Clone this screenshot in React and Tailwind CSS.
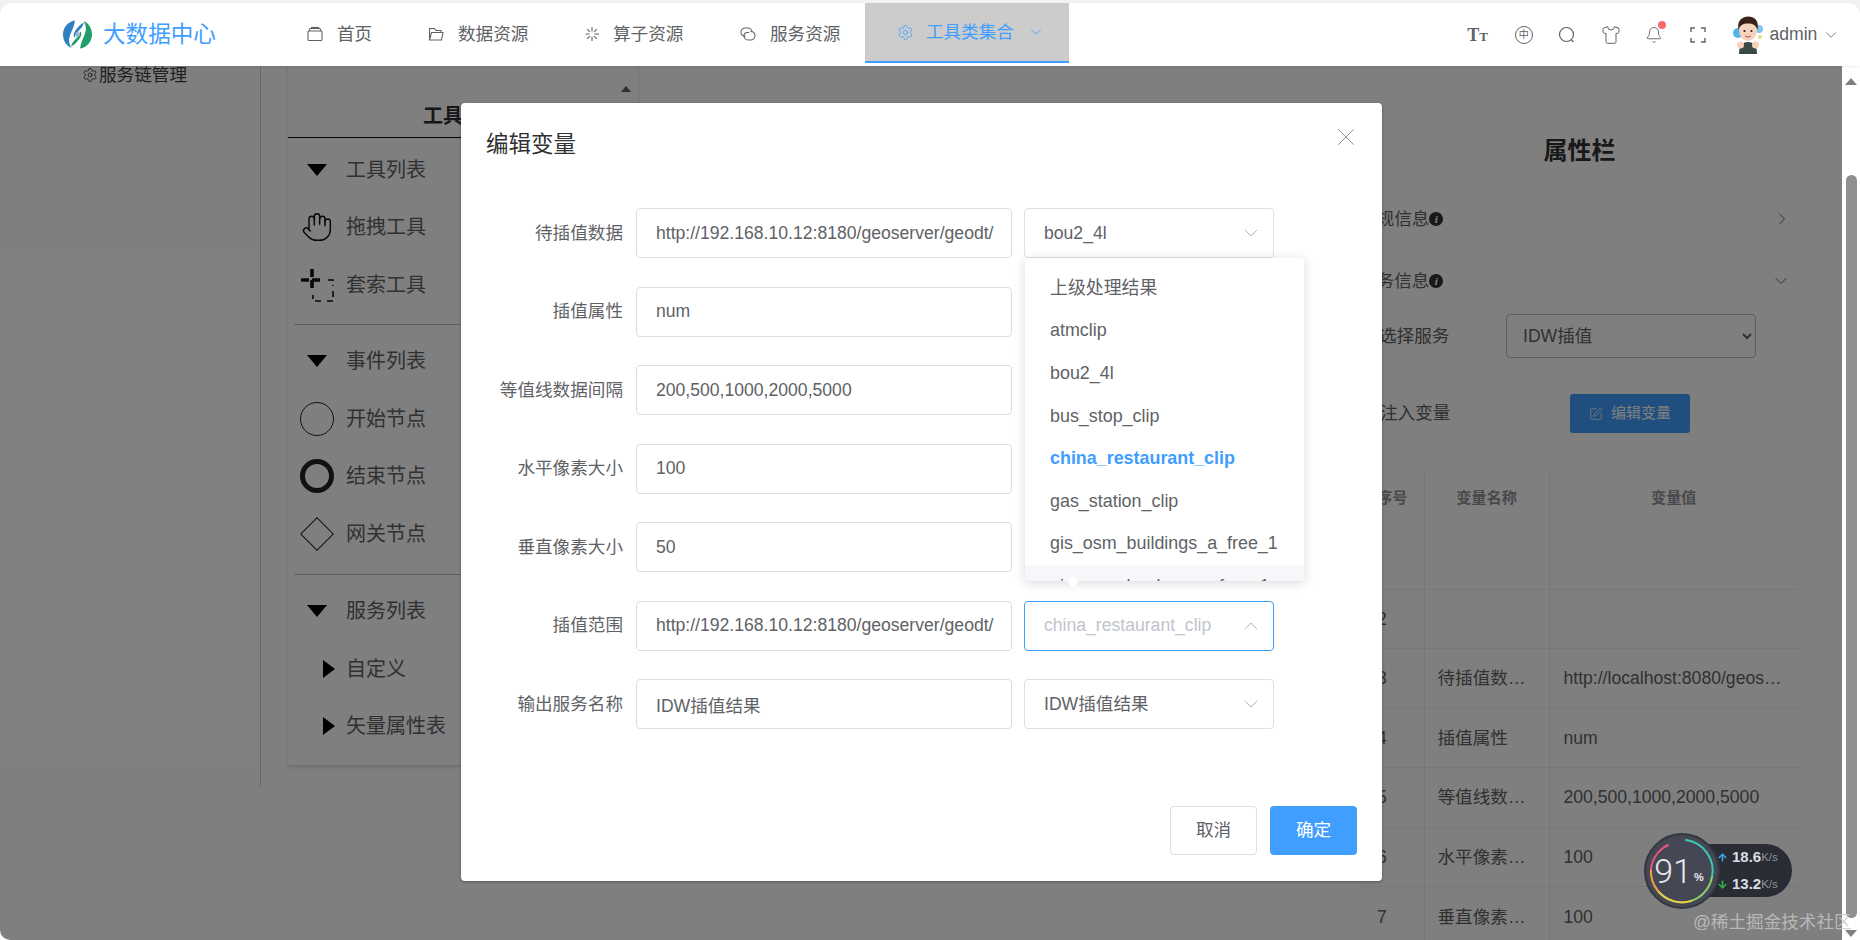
import { ArrowDown, ArrowUp, Bell, ChevronDown, ChevronRight, ChevronUp, Hand, Settings, Shirt, SquarePen, X } from "lucide-react";

const nav = [
  { label: "首页", icon: "home", iconGap: "ml-[13px]", mr: "mr-[54.8px]" },
  { label: "数据资源", icon: "folder", iconGap: "ml-[13px]", mr: "mr-[54.6px]" },
  { label: "算子资源", icon: "spark", iconGap: "ml-[12px]", mr: "mr-[55.6px]" },
  { label: "服务资源", icon: "link", iconGap: "ml-[13px]", mr: "mr-[24.6px]" },
];

const formRows = [
  { label: "待插值数据", value: "http://192.168.10.12:8180/geoserver/geodt/", select: "bou2_4l" },
  { label: "插值属性", value: "num" },
  { label: "等值线数据间隔", value: "200,500,1000,2000,5000" },
  { label: "水平像素大小", value: "100" },
  { label: "垂直像素大小", value: "50" },
  { label: "插值范围", value: "http://192.168.10.12:8180/geoserver/geodt/", select: "china_restaurant_clip", open: true },
  { label: "输出服务名称", value: "IDW插值结果", select: "IDW插值结果" },
];

const options = [
  "上级处理结果",
  "atmclip",
  "bou2_4l",
  "bus_stop_clip",
  "china_restaurant_clip",
  "gas_station_clip",
  "gis_osm_buildings_a_free_1",
  "gis_osm_landuse_a_free_1",
];

const tableRows = [
  ["2", "", ""],
  ["3", "待插值数…", "http://localhost:8080/geos…"],
  ["4", "插值属性", "num"],
  ["5", "等值线数…", "200,500,1000,2000,5000"],
  ["6", "水平像素…", "100"],
  ["7", "垂直像素…", "100"],
];

const NavIcon = ({ name }) => {
  const common = { width: 18, height: 18, viewBox: "0 0 18 18", fill: "none", stroke: "#606266", strokeWidth: 1.1 };
  if (name === "home")
    return (
      <svg {...common}>
        <rect x="2" y="6" width="14" height="9.5" rx="1" />
        <path d="M3 6 L4 3.5 H14 L15 6" />
        <path d="M5 2.5 H13" />
      </svg>
    );
  if (name === "folder")
    return (
      <svg {...common}>
        <path d="M2.5 15 V3.5 H7.5 L9 5.5 H14 V7.5" />
        <path d="M2.5 15 L4.5 7.5 H16 L14.5 15 Z" />
      </svg>
    );
  if (name === "spark")
    return (
      <svg {...common}>
        <path d="M9 2 V6.5 M9 11.5 V16 M2.5 9 H6.5 M11.5 9 H16 M4.2 4.2 L6.8 6.8 M11.2 11.2 L13.8 13.8 M13.8 4.2 L11.2 6.8 M6.8 11.2 L4.2 13.8" />
      </svg>
    );
  return (
    <svg {...common}>
      <path d="M6.5 11.5 C3.5 11.5 2 9.5 2 7.2 C2 4.8 4 3 6.5 3 H9 C11.5 3 13 5 13 7" />
      <path d="M11.5 6.5 C14.5 6.5 16 8.5 16 10.8 C16 13.2 14 15 11.5 15 H9 C6.5 15 5 13 5 11 C5 9 6.5 7.5 8.5 7.5 H10 " />
    </svg>
  );
};

const Logo = () => (
  <svg width="31" height="31" viewBox="0 0 31 31">
    <g fill="#2f7fc1">
      <path d="M13 1.5 C6 2.5 1 8.5 1 15.5 C1 22 4.5 27 9.5 29 C6.5 24.5 6.5 19.5 8.5 15 C10 11.5 12 7.5 13 1.5 Z" />
      <path d="M22 3.5 C18.5 5 15 9 12.5 13 C11.2 15.5 11.5 18 13 18.5 C13 16 14.5 14 16 12.5 C18.5 10 21 7.5 22 3.5 Z" />
    </g>
    <g fill="#1f9e6b" transform="rotate(180 15.5 15.5)">
      <path d="M13 1.5 C6 2.5 1 8.5 1 15.5 C1 22 4.5 27 9.5 29 C6.5 24.5 6.5 19.5 8.5 15 C10 11.5 12 7.5 13 1.5 Z" />
      <path d="M22 3.5 C18.5 5 15 9 12.5 13 C11.2 15.5 11.5 18 13 18.5 C13 16 14.5 14 16 12.5 C18.5 10 21 7.5 22 3.5 Z" />
    </g>
    <circle cx="15.5" cy="15.5" r="2.4" fill="#9db8cf" />
  </svg>
);

const Avatar = () => (
  <svg width="32" height="38" viewBox="0 0 32 38">
    <circle cx="6" cy="17" r="5" fill="#52b3e8" />
    <circle cx="27" cy="13" r="4" fill="#7cc8ee" />
    <circle cx="28" cy="21" r="2" fill="#e8e07a" />
    <path d="M7 38 C7 30 10 26 16 26 C22 26 25 30 25 38 Z" fill="#3c4a44" />
    <ellipse cx="16" cy="14" rx="9" ry="11" fill="#f5d3bc" />
    <path d="M6.5 14 C4.5 4 11 0.5 16 0.5 C22 0.5 27.5 4 25.5 14 C24 9 21 7.5 16 7.5 C11 7.5 8 9 6.5 14 Z" fill="#3a2118" />
    <circle cx="12.5" cy="15" r="1.1" fill="#222" />
    <circle cx="19.5" cy="15" r="1.1" fill="#222" />
    <path d="M13 20 Q16 22.5 19 20" stroke="#c0504d" strokeWidth="1" fill="none" />
    <circle cx="8.5" cy="29" r="3.5" fill="#f5d3bc" />
    <circle cx="23.5" cy="29" r="3.5" fill="#f5d3bc" />
  </svg>
);

const Header = () => (
  <header className="relative z-20 flex h-[63px] shrink-0 items-center rounded-t-[12px] bg-white pl-[62px] shadow-[0_1px_2px_rgba(0,0,0,0.08)]">
    <Logo />
    <span className="ml-[10px] mr-[90px] text-[22.6px] text-[#409eff]">大数据中心</span>
    {nav.map((item) => (
      <div key={item.label} className={`flex items-center text-[17.6px] text-[#606266] ${item.mr}`}>
        <NavIcon name={item.icon} />
        <span className={item.iconGap}>{item.label}</span>
      </div>
    ))}
    <div className="flex h-[60px] w-[204px] items-center self-start border-b-2 border-[#409eff] bg-[#cccccc] pl-[32px] text-[17.6px] text-[#409eff]">
      <Settings size={17} strokeWidth={1.2} />
      <span className="ml-[12px]">工具类集合</span>
      <ChevronDown size={18} strokeWidth={1.1} className="ml-[13px]" />
    </div>
    <div className="ml-auto mr-[19.6px] flex items-center text-[#606266]">
      <span className="flex w-[22px] items-baseline justify-center font-['Liberation_Serif',serif] font-bold leading-none">
        <span className="text-[18px]">T</span>
        <span className="text-[13px]">T</span>
      </span>
      <span className="ml-[26px] flex h-[18px] w-[18px] items-center justify-center rounded-full border border-[#606266] text-[10px] leading-none">
        中
      </span>
      <svg className="ml-[25px]" width="18" height="18" viewBox="0 0 18 18" fill="none" stroke="#606266" strokeWidth="1.2">
        <circle cx="8.5" cy="8.5" r="7" />
        <path d="M13.5 14 L15.5 16" />
      </svg>
      <Shirt className="ml-[25px]" size={20} strokeWidth={1.2} />
      <span className="relative ml-[24px]">
        <Bell size={18} strokeWidth={1.2} />
        <span className="absolute -right-[3px] -top-[5px] h-[8px] w-[8px] rounded-full bg-[#f56c6c]" />
      </span>
      <svg className="ml-[26px]" width="18" height="18" viewBox="0 0 18 18" fill="none" stroke="#606266" strokeWidth="1.4">
        <path d="M2 6 V2 H6 M12 2 H16 V6 M16 12 V16 H12 M6 16 H2 V12" />
      </svg>
      <span className="ml-[25px]">
        <Avatar />
      </span>
      <span className="ml-[5.8px] text-[17.6px]">admin</span>
      <ChevronDown className="ml-[5px]" size={18} strokeWidth={1.1} />
    </div>
  </header>
);

const DownTriangle = () => <span className="h-0 w-0 border-x-[10px] border-t-[12px] border-x-transparent border-t-black" />;
const RightTriangle = () => <span className="ml-[24px] h-0 w-0 border-y-[9px] border-l-[12px] border-y-transparent border-l-black" />;

const Lasso = () => (
  <svg width="34" height="34" viewBox="0 0 34 34" fill="none" stroke="#111">
    <path d="M12 1 V23 M1 12 H23" strokeWidth="3.6" strokeDasharray="8 3" />
    <path d="M28 12 H33 V18 M33 23 V33 H27 M21 33 H13 V27" strokeWidth="1.6" strokeDasharray="6 4" />
  </svg>
);

const ToolRow = ({ icon, label }) => (
  <div className="flex h-[57.5px] items-center">
    <span className="flex w-[58px] shrink-0 items-center justify-center">{icon}</span>
    <span className="text-[20px] text-[#606266]">{label}</span>
  </div>
);

const ToolPanel = () => (
  <div className="relative ml-[27px] h-[699px] w-[350px] shrink-0 bg-white shadow-[0_2px_4px_rgba(0,0,0,0.15)]">
    <span className="absolute right-[7px] top-[20px] h-0 w-0 border-x-[5px] border-b-[6px] border-x-transparent border-b-[#606060]" />
    <div className="flex h-[72px] items-end justify-center border-b border-black pb-[6px]">
      <span className="mr-[20px] text-[20px] font-bold text-[#303133]">工具栏</span>
    </div>
    <div className="mx-[6px] mt-[3px] border-b border-[#bbb] pb-[10px]">
      <div className="-mx-[6px]">
        <ToolRow icon={<DownTriangle />} label="工具列表" />
        <ToolRow icon={<Hand size={32} strokeWidth={1.1} color="#111" />} label="拖拽工具" />
        <ToolRow icon={<Lasso />} label="套索工具" />
      </div>
    </div>
    <div className="mx-[6px] border-b border-[#bbb] pb-[11px] pt-[8px]">
      <div className="-mx-[6px]">
        <ToolRow icon={<DownTriangle />} label="事件列表" />
        <ToolRow icon={<span className="h-[34px] w-[34px] rounded-full border-[1.5px] border-[#222]" />} label="开始节点" />
        <ToolRow icon={<span className="h-[34px] w-[34px] rounded-full border-[5px] border-[#222]" />} label="结束节点" />
        <ToolRow icon={<span className="h-[24px] w-[24px] rotate-45 border-[1.5px] border-[#222]" />} label="网关节点" />
      </div>
    </div>
    <div className="pt-[8px]">
      <ToolRow icon={<DownTriangle />} label="服务列表" />
      <ToolRow icon={<RightTriangle />} label="自定义" />
      <ToolRow icon={<RightTriangle />} label="矢量属性表" />
    </div>
  </div>
);

const InfoDot = () => (
  <span className="flex h-[14px] w-[14px] items-center justify-center rounded-full bg-[#333] font-['Liberation_Serif',serif] text-[11px] font-bold italic leading-none text-white">
    i
  </span>
);

const PropertyPanel = () => (
  <div className="ml-auto mr-[44px] w-[437px] shrink-0">
    <div className="flex h-[102px] items-end justify-center text-[24px] font-bold leading-[34px] text-[#303133]">
      属性栏
    </div>
    <div className="mt-[31px] flex h-[40px] items-center text-[17.6px] text-[#606266]">
      <span className="ml-[-2px]">常规信息</span>
      <InfoDot />
      <ChevronRight className="ml-auto mr-[6px]" size={20} strokeWidth={1.2} />
    </div>
    <div className="mt-[22px] flex h-[40px] items-center text-[17.6px] text-[#606266]">
      <span className="ml-[-2px]">任务信息</span>
      <InfoDot />
      <ChevronDown className="ml-auto mr-[7px]" size={20} strokeWidth={1.2} />
    </div>
    <div className="mt-[13px] flex items-center text-[17.6px] text-[#606266]">
      <span className="ml-[18px] w-[127px]">选择服务</span>
      <select className="h-[44px] w-[250px] rounded-[4px] border border-[#bbb] bg-white pl-[12px] text-[17.6px] text-[#606266]">
        <option>IDW插值</option>
      </select>
    </div>
    <div className="mt-[36px] flex items-center text-[17.6px] text-[#606266]">
      <span className="ml-[19px] w-[190px]">注入变量</span>
      <button className="flex h-[39px] w-[120px] items-center justify-center gap-[8px] rounded-[3px] bg-[#409eff] text-[15px] text-white">
        <SquarePen size={14} strokeWidth={1.3} />
        编辑变量
      </button>
    </div>
    <table className="mt-[40px] w-[437px] table-fixed border-collapse text-[17.6px] text-[#606266]">
      <colgroup>
        <col className="w-[63px]" />
        <col className="w-[125px]" />
        <col className="w-[249px]" />
      </colgroup>
      <thead>
        <tr className="h-[116px] border-b border-[#ebeef5] text-[15.2px] font-bold text-[#909399]">
          <th className="border-r border-[#ebeef5] pb-[65px] font-bold">序号</th>
          <th className="border-r border-[#ebeef5] pb-[65px] font-bold">变量名称</th>
          <th className="pb-[65px] font-bold">变量值</th>
        </tr>
      </thead>
      <tbody>
        {tableRows.map(([num, name, value]) => (
          <tr key={num} className="h-[59.6px] border-b border-[#ebeef5]">
            <td className="border-r border-[#ebeef5] pl-[16px]">{num}</td>
            <td className="border-r border-[#ebeef5] pl-[13px]">{name}</td>
            <td className="whitespace-nowrap pl-[14px]">{value}</td>
          </tr>
        ))}
      </tbody>
    </table>
  </div>
);

const SelectBox = ({ text, open }) => (
  <div
    className={`relative flex h-[50px] w-[250px] items-center justify-between rounded-[4px] border pl-[19px] pr-[10px] ${
      open ? "border-[#409eff] text-[#c0c4cc]" : "border-[#dcdfe6] text-[#606266]"
    }`}
  >
    <span>{text}</span>
    {open ? <ChevronUp size={24} strokeWidth={0.9} color="#a8abb2" /> : <ChevronDown size={24} strokeWidth={0.9} color="#a8abb2" />}
  </div>
);

const Dropdown = () => (
  <div className="absolute left-[1px] top-[50px] z-10">
    <div className="h-[323px] w-[279px] overflow-hidden rounded-[2px] bg-white pt-[9px] shadow-[0_2px_12px_rgba(0,0,0,0.15)]">
      {options.map((opt, i) => (
        <div
          key={opt}
          className={`flex h-[42.6px] items-center whitespace-nowrap px-[25px] text-[17.9px] ${
            i === 4 ? "font-bold text-[#409eff]" : "text-[#606266]"
          } ${i === 7 ? "bg-[#f5f7fa]" : ""}`}
        >
          {opt}
        </div>
      ))}
    </div>
    <span className="absolute left-[44px] top-[320px] h-[8px] w-[8px] rotate-45 bg-white" />
  </div>
);

const Modal = () => (
  <div className="absolute left-[461px] top-[37px] z-10 flex h-[778px] w-[921px] flex-col rounded-[4px] bg-white shadow-[0_1px_3px_rgba(0,0,0,0.3)]">
    <div className="flex h-[105px] items-start justify-between pl-[25px] pr-[21px]">
      <span className="mt-[24px] text-[22.5px] leading-[36px] text-[#303133]">编辑变量</span>
      <X className="mt-[19px]" size={30} strokeWidth={0.8} color="#909399" />
    </div>
    <div className="flex flex-col gap-[28.5px] text-[17.6px] text-[#606266]">
      {formRows.map((row) => (
        <div key={row.label} className="flex items-center">
          <label className="w-[162px] text-right">{row.label}</label>
          <input
            readOnly
            value={row.value}
            className="ml-[13px] h-[50px] w-[376px] rounded-[4px] border border-[#dcdfe6] pl-[19px] pr-[14px] text-[17.6px] text-[#606266] outline-none"
          />
          {row.select && (
            <div className="relative ml-[12px]">
              <SelectBox text={row.select} open={row.open} />
              {row.label === "待插值数据" && <Dropdown />}
            </div>
          )}
        </div>
      ))}
    </div>
    <div className="mt-auto flex justify-end gap-[13px] pb-[26px] pr-[25px] text-[17.6px]">
      <button className="h-[49px] w-[87px] rounded-[4px] border border-[#dcdfe6] bg-white text-[#606266]">取消</button>
      <button className="h-[49px] w-[87px] rounded-[4px] bg-[#409eff] text-white">确定</button>
    </div>
  </div>
);

const NetWidget = () => (
  <div className="absolute left-[1644px] top-[844px] z-30 flex items-center">
    <div className="ml-[38px] flex h-[53px] w-[110px] flex-col justify-center gap-[7px] rounded-r-full bg-[#2a2c35] pl-[47px] text-[15px] font-bold leading-[20px] text-[#dcdde0]">
      <div className="flex items-center">
        <ArrowUp className="ml-[-12px] mr-[4px]" size={11} strokeWidth={3.5} color="#3da5e8" />
        18.6<span className="text-[11.5px] font-normal text-[#8f939c]">K/s</span>
      </div>
      <div className="flex items-center">
        <ArrowDown className="ml-[-12px] mr-[4px]" size={11} strokeWidth={3.5} color="#2db24a" />
        13.2<span className="text-[11.5px] font-normal text-[#8f939c]">K/s</span>
      </div>
    </div>
    <div className="absolute left-0 top-[-11px] flex h-[76px] w-[76px] items-center justify-center rounded-full border-2 border-[#343741] bg-[#454854] text-[#e8e8ea]">
      <svg className="absolute inset-0" viewBox="0 0 72 72" fill="none" strokeWidth="2" strokeLinecap="round">
        <path d="M40 5 A31 31 0 0 1 66 42" stroke="#3ec9b4" />
        <path d="M66 42 A31 31 0 0 1 45 66" stroke="#8bd06a" />
        <path d="M45 66 A31 31 0 0 1 12 56" stroke="#e6d24a" />
        <path d="M12 56 A31 31 0 0 1 5 34" stroke="#f2a044" />
        <path d="M5 34 A31 31 0 0 1 22 10" stroke="#e8577f" />
      </svg>
      <span className="ml-[-6px] font-['Roboto',sans-serif] text-[34px] font-light leading-none">91</span>
      <span className="ml-[2px] mt-[12px] text-[11px] font-bold leading-none">%</span>
    </div>
  </div>
);

const App = () => {
  return (
    <div className="relative flex h-[940px] w-[1860px] flex-col overflow-hidden bg-[#f2f2f2] pt-[3px] font-['Liberation_Sans','Noto_Sans_CJK_SC',sans-serif]">
      <Header />
      <div className="flex min-h-0 flex-1 bg-white">
        <div className="relative flex min-w-0 flex-1 overflow-hidden rounded-bl-[10px] bg-white pl-px">
          <div className="h-[721px] w-[260px] shrink-0 border-r border-[#d0d0d0] pl-[81px] text-[17.6px] leading-[18px] text-[#404246]">
            <div className="flex items-center">
              <Settings className="mr-px" size={16} strokeWidth={1.4} />
              服务链管理
            </div>
          </div>
          <ToolPanel />
          <PropertyPanel />
          <div className="absolute inset-0 bg-black/50" />
          <Modal />
        </div>
        <div className="flex w-[18px] shrink-0 flex-col items-center bg-white">
          <span className="mt-[12px] h-0 w-0 border-x-[6px] border-b-[7px] border-x-transparent border-b-[#808080]" />
          <div className="mt-[90px] h-[743px] w-[11px] rounded-full bg-[#8f8f8f]" />
          <span className="mt-[12px] h-0 w-0 border-x-[6px] border-t-[7px] border-x-transparent border-t-[#808080]" />
        </div>
      </div>
      <NetWidget />
      <div className="absolute left-[1693px] top-[909px] z-40 text-[17.6px] text-[#c9c9c9]/80">@稀土掘金技术社区</div>
    </div>
  );
};

export default App;
